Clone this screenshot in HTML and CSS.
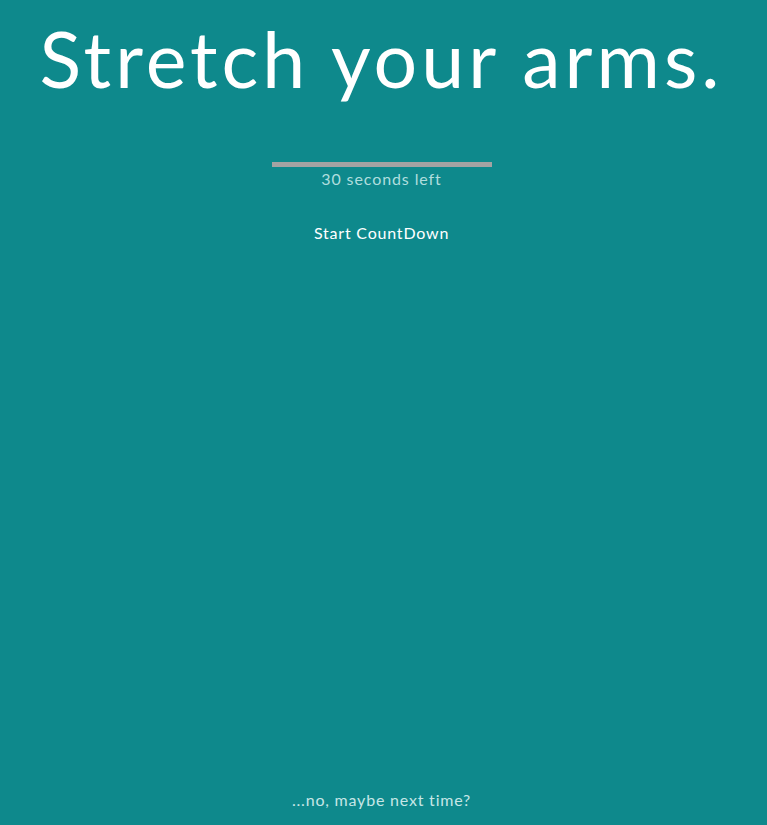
FILE: index.html
```html
<!DOCTYPE html>
<html>
<head>
<meta charset="utf-8">
<link rel="stylesheet" href="styles.css">
</head>
<body>
<main class="page">
  <h1 class="title">Stretch your arms.</h1>
  <div class="timer">
    <div class="bar"></div>
    <p class="left">30 seconds left</p>
  </div>
  <button class="start">Start CountDown</button>
  <div class="spacer"></div>
  <a class="skip">...no, maybe next time?</a>
</main>
</body>
</html>
```
FILE: styles.css
```css
html, body {
  margin: 0;
  padding: 0;
  height: 100%;
  background: #0e898c;
}
.page {
  height: 825px;
  box-sizing: border-box;
  padding-right: 4px;
  display: flex;
  flex-direction: column;
  align-items: center;
  font-family: "Lato", "Open Sans", sans-serif;
  color: #ffffff;
}
.title {
  margin: 10px 0 0 0;
  font-weight: 400;
  font-size: 77px;
  line-height: 96px;
  letter-spacing: 4px;
}
.timer {
  margin-top: 56px;
  display: flex;
  flex-direction: column;
  align-items: center;
}
.bar {
  width: 220px;
  height: 5px;
  background: #a3a3a3;
}
.left {
  margin: 2px 0 0 0;
  font-size: 16px;
  line-height: 20px;
  letter-spacing: 0.9px;
  color: #b0dede;
}
.start {
  margin-top: 34px;
  background: none;
  border: none;
  color: #ffffff;
  font-family: inherit;
  font-size: 16px;
  line-height: 20px;
  letter-spacing: 0.8px;
  padding: 0;
}
.spacer { flex: 1; }
.skip {
  margin-bottom: 15px;
  font-size: 16px;
  line-height: 20px;
  letter-spacing: 0.8px;
  color: #c6e6e6;
}
```
